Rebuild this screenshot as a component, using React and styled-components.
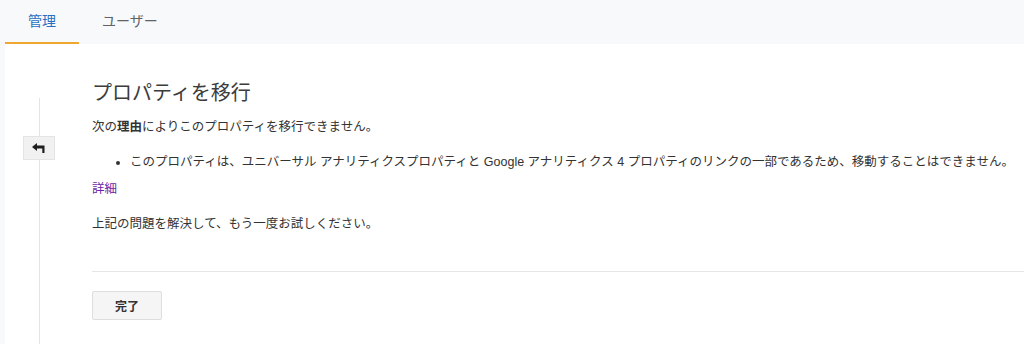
import React from "react";
import styled, { createGlobalStyle } from "styled-components";

const GlobalStyle = createGlobalStyle`
  html, body {
    margin: 0;
    padding: 0;
    background: #f8f9fa;
    font-family: "Liberation Sans", Arial, "Noto Sans CJK JP", sans-serif;
  }
  #root {
    height: 344px;
    display: flex;
    flex-direction: column;
  }
`;

const TabBar = styled.div`
  display: flex;
  height: 44px;
  padding-left: 5px;
  background: #f8f9fa;
  flex-shrink: 0;
`;

const Tab = styled.div`
  padding: 0 23px 3px;
  display: flex;
  align-items: center;
  font-size: 14px;
  color: ${(p) => (p.active ? "#2a6fc0" : "#5f6368")};
  border-bottom: 2px solid ${(p) => (p.active ? "#f0a630" : "transparent")};
  box-sizing: border-box;
`;

const Card = styled.div`
  flex: 1;
  margin-left: 5px;
  background: #fff;
  display: flex;
  min-height: 0;
`;

const Rail = styled.div`
  width: 87px;
  flex-shrink: 0;
  display: flex;
  flex-direction: column;
  align-items: center;
  padding-top: 54px;
  padding-right: 19px;
  box-sizing: border-box;
`;

const RailLine = styled.div`
  width: 1px;
  background: #e3e3e3;
  height: ${(p) => (p.grow ? "auto" : p.h + "px")};
  flex: ${(p) => (p.grow ? 1 : "none")};
`;

const BackButton = styled.button`
  width: 32px;
  height: 24px;
  padding: 0;
  background: #f1f1f1;
  border: 1px solid #e4e4e4;
  display: flex;
  align-items: center;
  justify-content: center;
`;

const Main = styled.div`
  flex: 1;
  padding-top: 36px;
  color: #333;
  font-size: 12.5px;
`;

const Title = styled.h1`
  margin: 0 0 12px;
  font-size: 20px;
  font-weight: normal;
  line-height: 26px;
  color: #3c3c3c;
`;

const Para = styled.p`
  margin: ${(p) => (p.gap ? p.gap + "px" : 0)} 0 0;
  line-height: 18px;
  b {
    font-weight: bold;
  }
`;

const Bullets = styled.ul`
  margin: 17px 0 0;
  padding-left: 38px;
  line-height: 18px;
  white-space: nowrap;
`;

const Link = styled.a`
  display: block;
  margin-top: 9px;
  color: #6a1ea5;
  text-decoration: none;
  line-height: 18px;
`;

const Divider = styled.hr`
  border: none;
  border-top: 1px solid #e6e6e6;
  margin: 38px 0 19px;
`;

const DoneButton = styled.button`
  width: 70px;
  height: 29px;
  background: #f5f5f5;
  border: 1px solid #dedede;
  border-radius: 2px;
  font-family: inherit;
  font-size: 12px;
  font-weight: bold;
  color: #333;
`;

const BackIcon = () => (
  <svg width="14" height="10" viewBox="0 0 14 10">
    <path d="M0 4 L5 0 V2.6 H12.5 V10 H10.3 V5.4 H5 V8 Z" fill="#1e1e1e" />
  </svg>
);

export default function App() {
  return (
    <>
      <GlobalStyle />
      <TabBar>
        <Tab active>管理</Tab>
        <Tab>ユーザー</Tab>
      </TabBar>
      <Card>
        <Rail>
          <RailLine h={38} />
          <BackButton>
            <BackIcon />
          </BackButton>
          <RailLine grow />
        </Rail>
        <Main>
          <Title>プロパティを移行</Title>
          <Para>
            次の<b>理由</b>によりこのプロパティを移行できません。
          </Para>
          <Bullets>
            <li>
              このプロパティは、ユニバーサル アナリティクスプロパティと Google アナリティクス 4 プロパティのリンクの一部であるため、移動することはできません。
            </li>
          </Bullets>
          <Link href="#">詳細</Link>
          <Para gap={17}>上記の問題を解決して、もう一度お試しください。</Para>
          <Divider />
          <DoneButton>完了</DoneButton>
        </Main>
      </Card>
    </>
  );
}
